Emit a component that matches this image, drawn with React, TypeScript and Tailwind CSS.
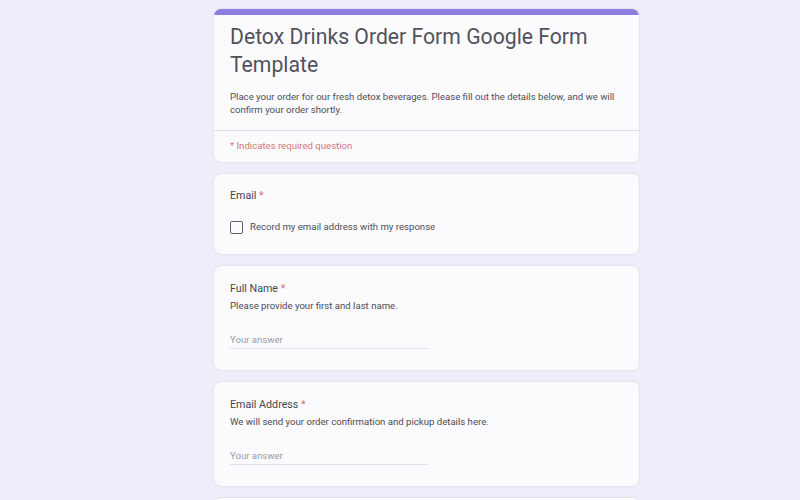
const fontStack = { fontFamily: "Roboto, 'Liberation Sans', Arial, sans-serif" };

type QuestionProps = {
  label: string;
  description?: string;
};

function Required() {
  return <span className="text-[#d36f6f]"> *</span>;
}

function TextQuestion({ label, description }: QuestionProps) {
  return (
    <div className="rounded-lg border border-[#e4e3f0] bg-[#fbfbfe] px-[16px] pt-[15px] pb-[21px]">
      <div className="text-[10.7px] leading-[15px] text-[#45454f]">
        {label}
        <Required />
      </div>
      <div className="mt-[3px] text-[9.6px] leading-[14px] text-[#4a4a55]">{description}</div>
      <div className="mt-[20px] w-[198px] border-b border-[#e2e2ea] pb-[1px] text-[9.6px] leading-[14px] text-[#9a9aa4]">
        Your answer
      </div>
    </div>
  );
}

export default function App() {
  return (
    <div className="h-[500px] w-full overflow-hidden bg-[#eeedfa]" style={fontStack}>
      <div className="ml-[213px] flex w-[427px] flex-col gap-[10px] pt-[8px]">
        {/* header card */}
        <div className="overflow-hidden rounded-lg border border-[#e4e3f0] bg-[#fbfbfe]">
          <div className="h-[6px] bg-[#8a7fde]" />
          <div className="px-[16px] pt-[8px] pb-[14px]">
            <h1 className="text-[21.2px] leading-[28px] text-[#52525c]">
              Detox Drinks Order Form Google Form Template
            </h1>
            <p className="mt-[11px] text-[9.6px] leading-[13px] text-[#4e4e58]">
              Place your order for our fresh detox beverages. Please fill out the details below, and we will
              confirm your order shortly.
            </p>
          </div>
          <div className="border-t border-[#e0dfe8] px-[16px] pt-[8px] pb-[9px] text-[9.6px] leading-[14px] text-[#d37777]">
            * Indicates required question
          </div>
        </div>

        {/* email collection */}
        <div className="rounded-lg border border-[#e4e3f0] bg-[#fbfbfe] px-[16px] pt-[14px] pb-[20px]">
          <div className="text-[10.7px] leading-[16px] text-[#45454f]">
            Email
            <Required />
          </div>
          <div className="mt-[16px] flex items-center gap-[7px]">
            <div className="h-[13px] w-[13px] rounded-[2px] border-[1.5px] border-[#5f5f69]" />
            <span className="text-[9.6px] leading-[14px] text-[#4e4e58]">
              Record my email address with my response
            </span>
          </div>
        </div>

        <TextQuestion label="Full Name" description="Please provide your first and last name." />
        <TextQuestion
          label="Email Address"
          description="We will send your order confirmation and pickup details here."
        />
        <div className="h-[40px] rounded-lg border border-[#e4e3f0] bg-[#fbfbfe]" />
      </div>
    </div>
  );
}
